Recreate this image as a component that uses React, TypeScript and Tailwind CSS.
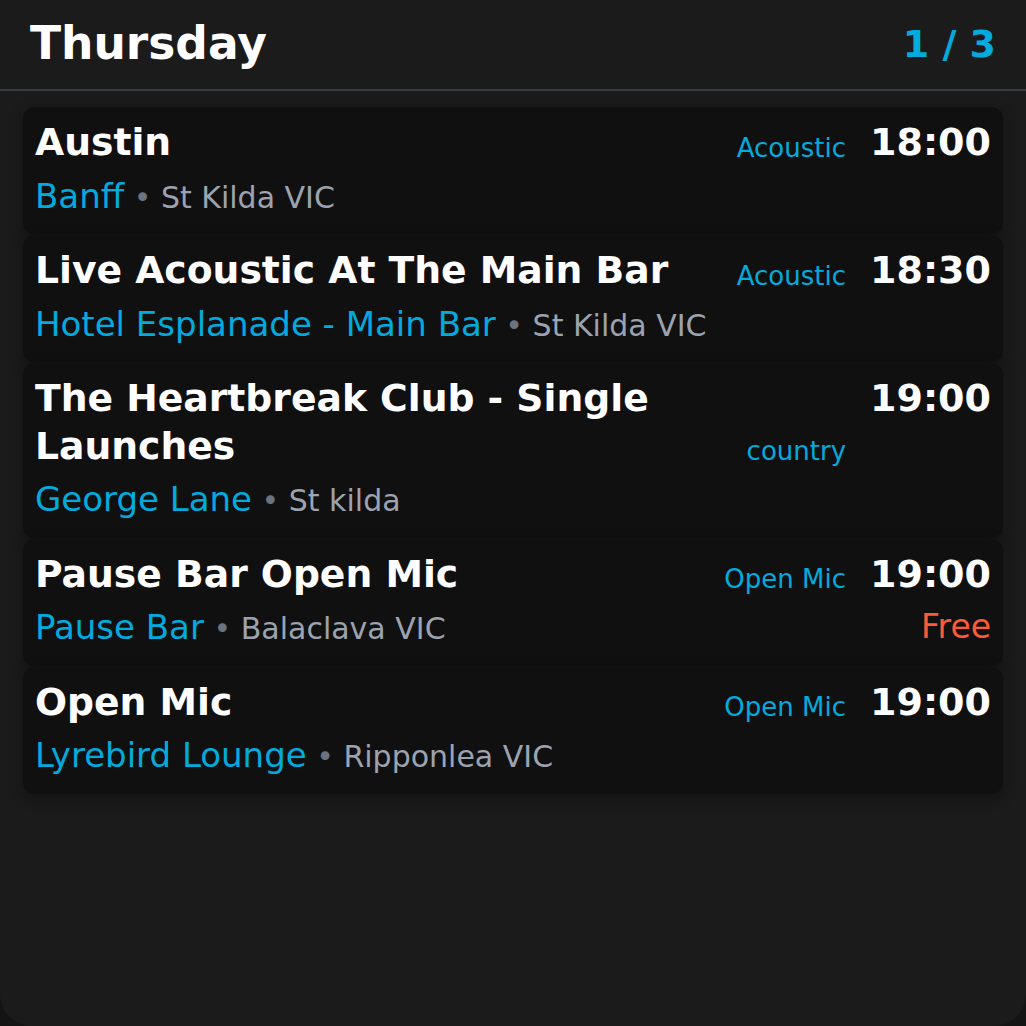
import React from "react";

type Ev = {
  title: string;
  genre: string;
  time: string;
  venue: string;
  locality: string;
  price?: string;
};

const events: Ev[] = [
  { title: "Austin", genre: "Acoustic", time: "18:00", venue: "Banff", locality: "St Kilda VIC" },
  {
    title: "Live Acoustic At The Main Bar",
    genre: "Acoustic",
    time: "18:30",
    venue: "Hotel Esplanade - Main Bar",
    locality: "St Kilda VIC",
  },
  {
    title: "The Heartbreak Club - Single Launches",
    genre: "country",
    time: "19:00",
    venue: "George Lane",
    locality: "St kilda",
  },
  {
    title: "Pause Bar Open Mic",
    genre: "Open Mic",
    time: "19:00",
    venue: "Pause Bar",
    locality: "Balaclava VIC",
    price: "Free",
  },
  { title: "Open Mic", genre: "Open Mic", time: "19:00", venue: "Lyrebird Lounge", locality: "Ripponlea VIC" },
];

function Card({ ev }: { ev: Ev }) {
  return (
    <div className="flex gap-6 rounded-xl bg-[#101010] p-3 shadow-[0_4px_14px_rgba(0,0,0,0.35)]">
      <div className="flex min-w-0 flex-1 flex-col">
        <div className="flex items-end gap-4">
          <div className="flex-1 text-[37.7px] font-bold leading-[47.5px] text-white">{ev.title}</div>
          <div className="whitespace-nowrap text-[26px] leading-[38px] text-[#02aadd]">{ev.genre}</div>
        </div>
        <div className="h-[55.5px] whitespace-nowrap text-[34px] leading-[58px]">
          <span className="text-[#02aadd]">{ev.venue}</span>
          <span className="text-[30px] leading-none text-[#6b7280]"> • </span>
          <span className="text-[30px] leading-none text-[#9ca3af]">{ev.locality}</span>
        </div>
      </div>
      <div className="flex flex-col items-end">
        <div className="text-[38px] font-bold leading-[47.5px] text-white">{ev.time}</div>
        {ev.price && <div className="h-[55.5px] text-[33px] leading-[58px] text-[#ff5a36]">{ev.price}</div>}
      </div>
    </div>
  );
}

export default function App() {
  return (
    <div className="h-[1026px] w-[1026px] bg-[#141414] font-['DejaVu_Sans',sans-serif]">
      <div className="h-full w-full overflow-hidden rounded-b-[32px] bg-[#1b1b1b]">
        <div className="flex h-[91px] items-center justify-between border-b-2 border-[#373c46] px-[30px]">
          <div className="text-[45.5px] font-bold text-white">Thursday</div>
          <div className="text-[38px] font-bold text-[#02aadd]">1 / 3</div>
        </div>
        <div className="flex flex-col gap-[1px] px-[23px] pt-4">
          {events.map((ev, i) => (
            <Card key={i} ev={ev} />
          ))}
        </div>
      </div>
    </div>
  );
}
